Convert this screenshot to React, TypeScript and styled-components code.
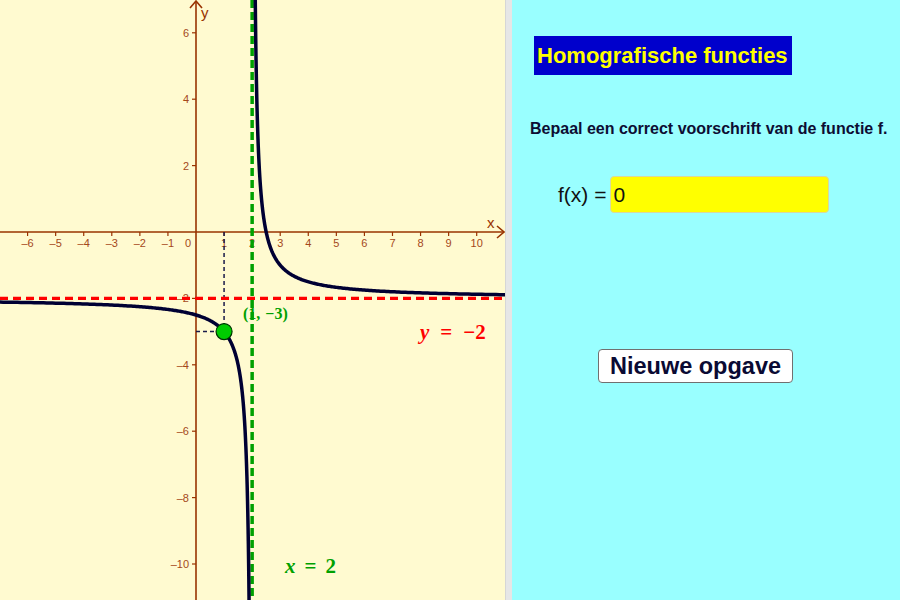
import React from 'react'
import styled, { createGlobalStyle } from 'styled-components'

const GlobalStyle = createGlobalStyle`
  html, body {
    margin: 0;
    padding: 0;
    overflow: hidden;
  }
  body {
    font-family: 'Liberation Sans', Arial, sans-serif;
  }
`

// graph scale (pixels per unit) and origin
const OX = 196
const OY = 232
const SX = 28.07
const SY = 33.2
const W = 505
const H = 600

const px = (x: number) => OX + x * SX
const py = (y: number) => OY - y * SY
const f = (x: number) => -2 + 1 / (x - 2)

const branch = (from: number, to: number, side: number) => {
  const pts: string[] = []
  const n = 300
  for (let i = 0; i <= n; i++) {
    const d = from * Math.pow(to / from, i / n)
    const x = 2 + side * d
    pts.push(`${px(x).toFixed(2)},${py(f(x)).toFixed(2)}`)
  }
  return 'M' + pts.join(' L')
}

const Page = styled.div`
  display: flex;
  width: 900px;
  height: 600px;
`

const GraphPanel = styled.div`
  width: ${W}px;
  height: ${H}px;
  background: #fffad0;
  overflow: hidden;
  flex-shrink: 0;
`

const Divider = styled.div`
  width: 7px;
  height: 100%;
  background: #e6e6e6;
  border-left: 1px solid #d6d6d6;
  box-sizing: border-box;
  flex-shrink: 0;
`

const SidePanel = styled.div`
  flex: 1;
  background: #99ffff;
  display: flex;
  flex-direction: column;
  align-items: flex-start;
  padding-top: 36px;
`

const Title = styled.h1`
  margin: 0 0 0 22px;
  height: 39px;
  padding: 0 4px 0 3px;
  display: flex;
  align-items: center;
  background: #0000cc;
  color: #ffff00;
  font-size: 22px;
  font-weight: bold;
`

const Prompt = styled.p`
  margin: 45px 0 0 18px;
  color: #0d0d33;
  font-size: 16px;
  font-weight: bold;
`

const FormulaRow = styled.label`
  margin: 38px 0 0 46px;
  display: flex;
  align-items: center;
  gap: 4px;
  font-size: 21px;
  color: #111;
`

const Field = styled.input`
  width: 219px;
  height: 37px;
  box-sizing: border-box;
  background: #ffff00;
  border: 1px solid #d8d8a0;
  border-radius: 4px;
  padding: 0 2px;
  font-family: 'Liberation Sans', Arial, sans-serif;
  font-size: 21px;
  color: #111;
  outline: none;
`

const NewButton = styled.button`
  margin: 136px 0 0 86px;
  width: 195px;
  height: 34px;
  background: #fff;
  border: 1px solid #707070;
  border-radius: 4px;
  font-family: 'Liberation Sans', Arial, sans-serif;
  font-size: 23.5px;
  font-weight: bold;
  color: #0a0a33;
  padding: 0;
  cursor: pointer;
`

const AXIS = '#993300'
const LABEL = '#a4481a'

const Graph = () => {
  const xs = [-6, -5, -4, -3, -2, -1, 1, 2, 3, 4, 5, 6, 7, 8, 9, 10]
  const ys = [6, 4, 2, -2, -4, -6, -8, -10]
  return (
    <svg width={W} height={H} viewBox={`0 0 ${W} ${H}`}>
      {/* axes */}
      <line x1={0} y1={OY} x2={W - 1} y2={OY} stroke={AXIS} strokeWidth={1.6} />
      <polyline points={`${W - 8},${OY - 6} ${W - 1},${OY} ${W - 8},${OY + 6}`} fill="none" stroke={AXIS} strokeWidth={1.6} />
      <line x1={OX} y1={1} x2={OX} y2={H} stroke={AXIS} strokeWidth={1.6} />
      <polyline points={`${OX - 6},${8} ${OX},${1} ${OX + 6},${8}`} fill="none" stroke={AXIS} strokeWidth={1.6} />
      <text x={487} y={228} fontFamily="Liberation Sans, sans-serif" fontSize={15} fill={AXIS}>x</text>
      <text x={201} y={18} fontFamily="Liberation Sans, sans-serif" fontSize={15} fill={AXIS}>y</text>

      {xs.map((v) => (
        <g key={`x${v}`}>
          <line x1={px(v)} y1={OY} x2={px(v)} y2={OY + 4} stroke={AXIS} strokeWidth={1.2} />
          <text x={px(v)} y={OY + 15} textAnchor="middle" fontFamily="Liberation Sans, sans-serif" fontSize={11} fill={LABEL}>
            {v < 0 ? `\u2013${-v}` : v}
          </text>
        </g>
      ))}
      <text x={OX - 8} y={OY + 15} textAnchor="middle" fontFamily="Liberation Sans, sans-serif" fontSize={11} fill={LABEL}>0</text>
      {ys.map((v) => (
        <g key={`y${v}`}>
          <line x1={OX - 4} y1={py(v)} x2={OX} y2={py(v)} stroke={AXIS} strokeWidth={1.2} />
          <text x={OX - 7} y={py(v) + 4} textAnchor="end" fontFamily="Liberation Sans, sans-serif" fontSize={11} fill={LABEL}>
            {v < 0 ? `\u2013${-v}` : v}
          </text>
        </g>
      ))}

      {/* projection lines of the point */}
      <line x1={px(1)} y1={OY} x2={px(1)} y2={py(-3)} stroke="#1a1a4a" strokeWidth={1.5} strokeDasharray="4 3" />
      <line x1={OX} y1={py(-3)} x2={px(1)} y2={py(-3)} stroke="#1a1a4a" strokeWidth={1.5} strokeDasharray="4 3" />

      {/* asymptotes */}
      <line x1={0} y1={py(-2)} x2={W} y2={py(-2)} stroke="#ff0000" strokeWidth={3.2} strokeDasharray="8 5" />
      <line x1={px(2)} y1={0} x2={px(2)} y2={H} stroke="#00a000" strokeWidth={3.5} strokeDasharray="8 4" />

      {/* graph of f */}
      <path d={branch(9, 0.108, -1)} fill="none" stroke="#000033" strokeWidth={3.5} />
      <path d={branch(0.108, 9.5, 1)} fill="none" stroke="#000033" strokeWidth={3.5} />

      <circle cx={px(1)} cy={py(-3)} r={8} fill="#00cc00" stroke="#003300" strokeWidth={1.2} />

      <text x={243} y={319} fontFamily="Liberation Serif, serif" fontWeight="bold" fontSize={16} fill="#00a000">
        (1,<tspan dx={5}>−3)</tspan>
      </text>
      <text x={420} y={339} fontFamily="Liberation Serif, serif" fontWeight="bold" fontSize={21} fill="#ff0000">
        <tspan fontStyle="italic">y</tspan>
        <tspan dx={11}>=</tspan>
        <tspan dx={11}>−2</tspan>
      </text>
      <text x={285} y={573} fontFamily="Liberation Serif, serif" fontWeight="bold" fontSize={21} fill="#00a000">
        <tspan fontStyle="italic">x</tspan>
        <tspan dx={9}>=</tspan>
        <tspan dx={9}>2</tspan>
      </text>
    </svg>
  )
}

const App = () => {
  return (
    <>
      <GlobalStyle />
      <Page>
        <GraphPanel>
          <Graph />
        </GraphPanel>
        <Divider />
        <SidePanel>
          <Title>Homografische functies</Title>
          <Prompt>Bepaal een correct voorschrift van de functie f.</Prompt>
          <FormulaRow>
            f(x) =
            <Field defaultValue="0" />
          </FormulaRow>
          <NewButton>Nieuwe opgave</NewButton>
        </SidePanel>
      </Page>
    </>
  )
}

export default App
